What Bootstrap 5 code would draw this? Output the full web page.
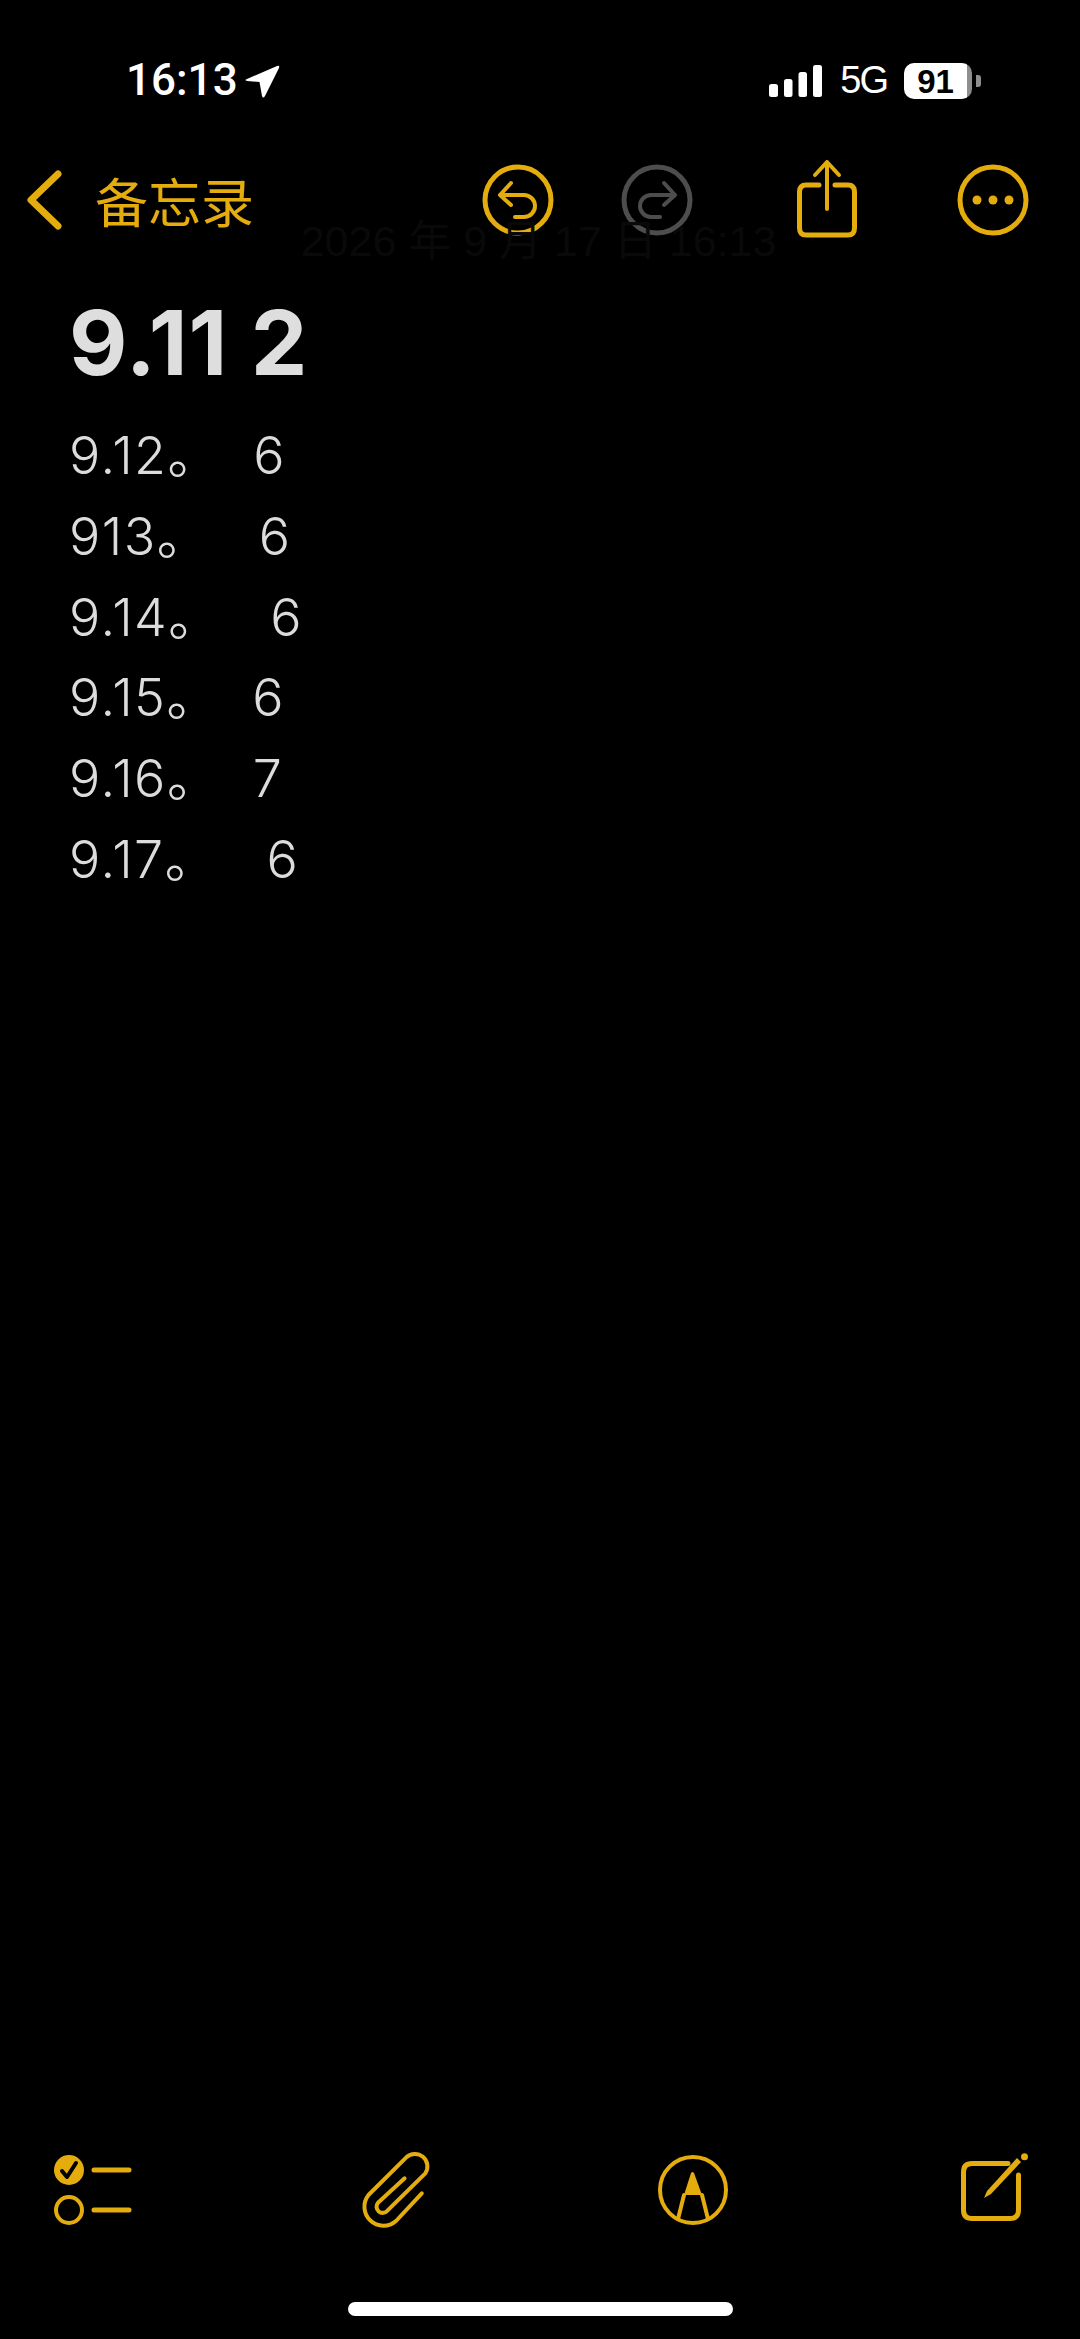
<!DOCTYPE html>
<html lang="zh">
<head>
    <meta charset="UTF-8">
    <title>备忘录</title>
    <link rel="stylesheet" href="https://cdn.jsdelivr.net/npm/bootstrap@5.3.3/dist/css/bootstrap.min.css">
    <style>
        html, body { background: #000; }
        body { width: 1080px; height: 2339px; overflow: hidden; font-family: "Liberation Sans", "Noto Sans CJK SC", sans-serif; }
        .phone { width: 1080px; height: 2339px; background: #000; }
        .status-row { height: 57px; margin-top: 52px; padding-left: 126px; padding-right: 99px; color: #fff; }
        .clock { font-family: Roboto, "Liberation Sans", sans-serif; font-weight: 500; font-size: 44px; line-height: 57px; width: 119px; }
        .net-label { font-size: 38px; line-height: 57px; letter-spacing: -2px; margin-left: 18px; margin-right: 17px; }
        .battery-pill { width: 68px; height: 36px; border-radius: 10px; color: #000; font-weight: 700; font-size: 33px; line-height: 37px; text-align: center; padding-right: 5px; background: linear-gradient(90deg, #fff 63px, #8e8e8e 63px); }
        .battery-nub { width: 5px; height: 12px; margin-left: 4px; background: #8e8e8e; border-radius: 0 3px 3px 0; }
        .top-tools { height: 80px; margin-top: 51px; padding-left: 27px; position: relative; }
        .back-label { font-size: 53px; line-height: 64px; color: #e4ac0c; margin-left: 33px; margin-right: 231px; font-family: "Noto Sans CJK SC", sans-serif; width: 157px; flex: none; white-space: nowrap; }
        .ghost-date { position: absolute; left: -3px; right: 0; top: 56px; text-align: center; font-size: 43px; line-height: 50px; color: #090909; }
        .note-body { padding-left: 69px; margin-top: 51px; color: #dcdcdc; height: 1859px; font-family: Inter, "Liberation Sans", "Noto Sans CJK SC", sans-serif; }
        .note-title { font-family: inherit; font-weight: 700; font-size: 90px; line-height: 104px; letter-spacing: 1px; margin: 0 0 21px; color: #dedede; }
        .note-line { font-size: 52px; line-height: 80.8px; white-space: pre; letter-spacing: 1.5px; font-weight: 350; }
        .bottom-tools { height: 90px; position: relative; }
        .home-bar { width: 385px; height: 14px; background: #fff; border-radius: 7px; margin: auto auto 23px; }
        svg { display: block; overflow: visible; flex: none; }
        .ico { fill: none; stroke: #e4ac0c; stroke-width: 5; stroke-linecap: round; stroke-linejoin: round; }
        .ico-thin { stroke-width: 4; }
        .ico-off { stroke: #4d4d4d; }
        .ico-fill { fill: #e4ac0c; stroke: none; }
        .gap-redo { margin-left: 69px; }
        .gap-share { margin-left: 105px; }
        .gap-more { margin-left: 101px; }
    </style>
</head>
<body>
<div class="phone d-flex flex-column">
    <!-- 상태바 -->
    <div class="status-row d-flex align-items-center">
        <span class="clock">16:13</span>
        <svg width="35" height="34" viewBox="245 63 35 34"><path d="M247 78 L277 65 Q280 64 279 67 L265 95 Q263 98 262 95 L259.500 81 L247 80 Q244 79 247 78Z" fill="#fff"/></svg>
        <div class="ms-auto d-flex align-items-center">
            <svg width="53" height="32" viewBox="767 63 53 32" fill="#fff">
                <rect x="767" y="82" width="9" height="13" rx="2.500"/>
                <rect x="782" y="77" width="8.500" height="18" rx="2.500"/>
                <rect x="796.500" y="70" width="8.500" height="25" rx="2.500"/>
                <rect x="811" y="63" width="9" height="32" rx="2.500"/>
            </svg>
            <span class="net-label">5G</span>
            <div class="battery-pill">91</div>
            <div class="battery-nub"></div>
        </div>
    </div>

    <!-- 상단 도구 -->
    <div class="top-tools d-flex align-items-center">
        <span class="ghost-date">2026 年 9 月 17 日 16:13</span>
        <svg width="35" height="60" viewBox="27 169 35 60"><path class="ico" style="stroke-width:7" d="M58 173 L31 199 L58 225"/></svg>
        <span class="back-label">备忘录</span>
        <svg width="70" height="70" viewBox="483 166 70 70" class="ico">
            <circle cx="518" cy="201" r="33"/>
            <path class="ico-thin" d="M511 184 L500 196 L511 206 M500 196 H524 A11 11 0 0 1 524 218 H515"/>
        </svg>
        <svg class="gap-redo ico ico-off" width="70" height="70" viewBox="622 166 70 70">
            <circle cx="657" cy="201" r="33"/>
            <path class="ico-thin" d="M664 184 L675 196 L664 206 M675 196 H651 A11 11 0 0 0 651 218 H660"/>
        </svg>
        <svg width="60" height="80" viewBox="797 159 60 80" class="ico gap-share">
            <path d="M819 184 H806 Q799.500 184 799.500 191 V227 Q799.500 234 806 234 H848 Q854.500 234 854.500 227 V191 Q854.500 184 848 184 H835"/>
            <path class="ico-thin" d="M827 208 V161 M815 174 L827 161 L839 174"/>
        </svg>
        <svg width="70" height="70" viewBox="958 165 70 70" class="ico gap-more">
            <circle cx="993" cy="200" r="33"/>
            <circle class="ico-fill" cx="977" cy="200" r="4.500"/>
            <circle class="ico-fill" cx="993" cy="200" r="4.500"/>
            <circle class="ico-fill" cx="1009" cy="200" r="4.500"/>
        </svg>
    </div>

    <!-- 메모 내용 -->
    <div class="note-body">
        <h1 class="note-title">9.11 2</h1>
        <div class="note-line">9.12。  6</div>
        <div class="note-line">913。   6</div>
        <div class="note-line">9.14。   6</div>
        <div class="note-line">9.15。  6</div>
        <div class="note-line">9.16。  7</div>
        <div class="note-line">9.17。   6</div>
    </div>

    <!-- 하단 도구 -->
    <div class="bottom-tools">
        <svg width="1080" height="90" viewBox="0 2150 1080 90" class="ico">
            <circle class="ico-fill" cx="69" cy="2170" r="15"/>
            <path d="M62 2171 L67 2177 L76 2163" style="stroke:#000;stroke-width:4"/>
            <circle class="ico-thin" cx="69" cy="2210" r="13"/>
            <path d="M94 2170 H129 M94 2210 H129"/>
            <path class="ico-thin" d="M421.800 2193.300 L396 2221 A19 19 0 0 1 368.500 2195 L406.300 2157.300 A12.500 12.500 0 0 1 425.300 2173.300 L387.400 2210.700 A6 6 0 0 1 378 2202.700 L404.600 2178.300"/>
            <circle class="ico-thin" cx="693" cy="2190" r="33"/>
            <path class="ico-fill" d="M691 2173 Q692.500 2171 694 2173 L702 2195 H684 Z"/>
            <path class="ico-thin" d="M684 2195 L678 2219 M702 2195 L708 2219"/>
            <path d="M1008 2163.500 H972 Q963.500 2163.500 963.500 2172 V2210 Q963.500 2218.500 972 2218.500 H1010 Q1018.500 2218.500 1018.500 2210 V2175"/>
            <path class="ico-fill" d="M984 2198 L987 2191 L1017 2158 L1021 2162 L991 2194 Z"/>
            <circle class="ico-fill" cx="1024.500" cy="2156.700" r="3.500"/>
        </svg>
    </div>
    <div class="home-bar"></div>
</div>
<script src="https://cdn.jsdelivr.net/npm/bootstrap@5.3.3/dist/js/bootstrap.bundle.min.js"></script>
</body>
</html>
